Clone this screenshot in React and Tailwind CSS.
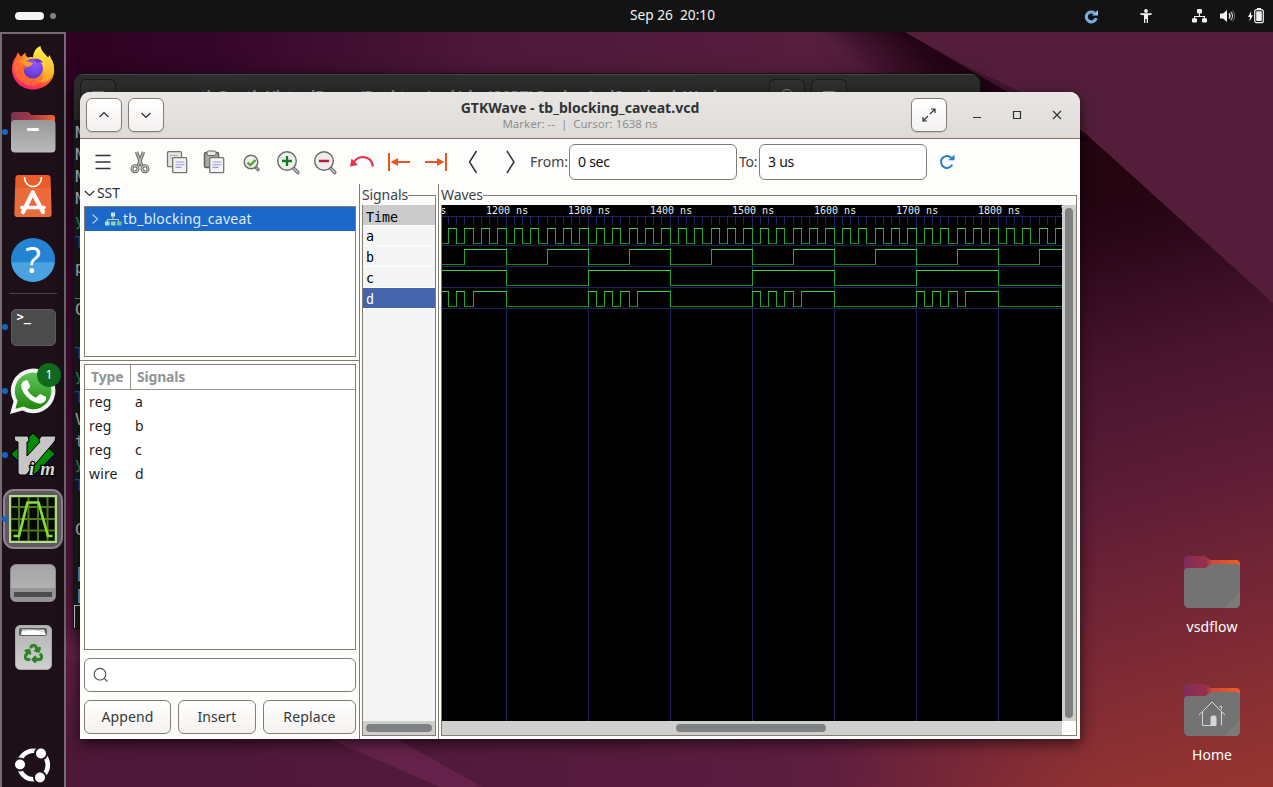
import React from "react";
import { FaRecycle } from "react-icons/fa";

/* ---------- desktop background ---------- */

function Wallpaper() {
  return (
    <svg className="absolute inset-0 h-full w-full" viewBox="0 0 1273 787" preserveAspectRatio="none">
      <defs>
        <linearGradient id="wpTop" x1="0" y1="0" x2="1" y2="0">
          <stop offset="0" stopColor="#2b001d" />
          <stop offset="0.2" stopColor="#35062a" />
          <stop offset="0.45" stopColor="#4d1839" />
          <stop offset="0.75" stopColor="#571e3e" />
          <stop offset="1" stopColor="#3a0f2b" />
        </linearGradient>
        <linearGradient id="wpBottom" x1="0" y1="0" x2="1" y2="0">
          <stop offset="0" stopColor="#4d1737" />
          <stop offset="0.3" stopColor="#51193b" />
          <stop offset="0.6" stopColor="#5c1d3f" />
          <stop offset="0.85" stopColor="#7a2839" />
          <stop offset="1" stopColor="#98352f" />
        </linearGradient>
        <linearGradient id="wpLeft" x1="0" y1="0" x2="0" y2="1">
          <stop offset="0" stopColor="#2b001d" />
          <stop offset="0.55" stopColor="#48143a" />
          <stop offset="0.8" stopColor="#5b1d42" />
          <stop offset="1" stopColor="#4a1635" />
        </linearGradient>
        <linearGradient id="wpRight" gradientUnits="userSpaceOnUse" x1="1080" y1="200" x2="1240" y2="787">
          <stop offset="0" stopColor="#23040f" />
          <stop offset="0.08" stopColor="#2b0718" />
          <stop offset="0.28" stopColor="#48142f" />
          <stop offset="0.52" stopColor="#611e36" />
          <stop offset="0.75" stopColor="#7c2935" />
          <stop offset="1" stopColor="#963530" />
        </linearGradient>
        <linearGradient id="wpFade" gradientUnits="userSpaceOnUse" x1="840" y1="0" x2="1100" y2="0">
          <stop offset="0" stopColor="#fff" stopOpacity="0" />
          <stop offset="1" stopColor="#fff" />
        </linearGradient>
        <mask id="wpMask"><rect x="840" y="0" width="433" height="787" fill="url(#wpFade)" /></mask>
        <linearGradient id="wpFold" gradientUnits="userSpaceOnUse" x1="862" y1="72" x2="900" y2="28">
          <stop offset="0" stopColor="#1c0010" stopOpacity="0" />
          <stop offset="1" stopColor="#1c0010" stopOpacity="0.85" />
        </linearGradient>
      </defs>
      <rect width="1273" height="787" fill="#4d1737" />
      <rect x="0" y="0" width="1080" height="120" fill="url(#wpTop)" />
      <rect x="0" y="92" width="80" height="695" fill="url(#wpLeft)" />
      <rect x="66" y="735" width="1207" height="52" fill="url(#wpBottom)" />
      <polygon points="320,735 390,735 482,787 440,787" fill="#64224a" />
      <polygon points="66,640 80,645 80,664 66,658" fill="#5f1f44" />
      <rect x="840" y="92" width="433" height="695" fill="url(#wpRight)" mask="url(#wpMask)" />
      <polygon points="790,32 905,32 1090,140 1040,150" fill="url(#wpFold)" />
      <polygon points="905,32 1273,32 1273,303 1085,133 1027,95 970,68" fill="#541e3b" />
    </svg>
  );
}

/* ---------- top bar ---------- */

function TopBar() {
  return (
    <div className="relative flex h-8 w-full items-center bg-[#131313] text-[#f2f2f2]">
      <div className="flex w-[66px] items-center gap-[6px] pl-[15px]">
        <span className="h-2 w-[29px] rounded-full bg-[#f4f4f4]" />
        <span className="h-[6px] w-[6px] rounded-full bg-[#828282]" />
      </div>
      <div className="flex-1 pl-[6px] pb-[2px] text-center font-['Noto_Sans',sans-serif] text-[13.7px] whitespace-pre">Sep 26  20:10</div>
      <div className="w-0" />
      <div className="absolute top-0 right-0 flex h-8 items-center">
        <svg className="mr-[41px] h-[15px] w-[15px]" viewBox="0 0 15 15">
          <path d="M12.2 9.2A5 5 0 1 1 10.5 4" fill="none" stroke="#78aee6" strokeWidth="3" />
          <path d="M8 6.5h6V1z" fill="#8fc0ee" />
        </svg>
        <svg className="mr-[40px] h-[14px] w-3" viewBox="0 0 12 14" fill="#f2f2f2">
          <circle cx="6" cy="2" r="1.9" />
          <path d="M.3 4.3h11.4v1.4L8 6.3V14H6.7v-4H5.3v4H4V6.300L.3 5.700z" />
        </svg>
        <svg className="mr-[13px] h-[14px] w-[15px]" viewBox="0 0 15 14" fill="#f2f2f2">
          <rect x="5" y="0" width="5" height="4.500" rx="1" />
          <path d="M7 4h1v3h5v3h-1V8H3v2H2V7h5z" />
          <rect x="0" y="9.300" width="5" height="4.200" rx="1" />
          <rect x="10" y="9.300" width="5" height="4.200" rx="1" />
        </svg>
        <svg className="mr-[13px] h-[14px] w-[15px]" viewBox="0 0 15 14" fill="none">
          <path d="M0 4.500h3L7 1v12L3 9.500H0z" fill="#f2f2f2" />
          <path d="M9 4.500q2 2.500 0 5" stroke="#f2f2f2" strokeWidth="1.300" />
          <path d="M10.800 2.800q3.500 4.200 0 8.400" stroke="#cfcfcf" strokeWidth="1.100" />
          <path d="M12.600 1.500q4 5.500 0 11" stroke="#6f6f6f" strokeWidth="1" />
        </svg>
        <svg className="mr-[9px] h-4 w-4" viewBox="0 0 16 16">
          <path d="M3.200 3L0 9h2l-.6 4.500L5 7.300H3z" fill="#f2f2f2" />
          <rect x="9" y="0" width="4" height="2" fill="#f2f2f2" />
          <rect x="6.700" y="1.700" width="8.600" height="13" rx="2" fill="none" stroke="#f2f2f2" strokeWidth="1.200" />
          <rect x="8.200" y="3.300" width="5.600" height="9.800" rx=".8" fill="#f2f2f2" />
        </svg>
      </div>
    </div>
  );
}

/* ---------- dock icons ---------- */

function Firefox() {
  return (
    <svg className="h-12 w-12" viewBox="0 0 48 48">
      <defs>
        <radialGradient id="ffBody" cx="0.75" cy="0.15" r="1">
          <stop offset="0" stopColor="#fff44f" />
          <stop offset="0.3" stopColor="#ffc02e" />
          <stop offset="0.55" stopColor="#ff7c22" />
          <stop offset="0.8" stopColor="#ff3750" />
          <stop offset="1" stopColor="#e31587" />
        </radialGradient>
        <radialGradient id="ffGlobe" cx="0.6" cy="0.2" r="0.9">
          <stop offset="0" stopColor="#9059ff" />
          <stop offset="0.6" stopColor="#7542e5" />
          <stop offset="1" stopColor="#4a2fb8" />
        </radialGradient>
        <linearGradient id="ffFlame" x1="0" y1="0" x2="0" y2="1">
          <stop offset="0" stopColor="#fff14a" />
          <stop offset="1" stopColor="#ffa225" />
        </linearGradient>
      </defs>
      <path d="M7.500 12C7.500 10 8.500 9.500 9.500 8.500c.3 2 1.300 3 3 4.200 1-2 2.300-3 4-4-.2 2 .4 3.500 2.500 4.800 3-.8 6-.5 8 .5l14-.5c3 4 4.200 8.500 4.200 13.500C45.200 36.500 36 45.500 24 45.500S3 36.500 3 25c0-5 1.500-9.500 4.500-13z" fill="url(#ffBody)" />
      <path d="M24 15c0-7 3-11.500 7.500-13 .4 5 4.500 7.500 7.500 11.500l1.800-2.500c.4 3 3.200 5.500 4 10 .8 4-.3 9-2.300 12.500C38 39 30 39 27 36c6-1 10-5 10-11 0-7-6-10-13-10z" fill="url(#ffFlame)" />
      <circle cx="24" cy="24.500" r="10" fill="url(#ffGlobe)" />
      <path d="M3.800 21C6 17 10 16 13.500 17.500c3 1.300 6.500.8 10.500 1.500-.5 2.500-3.500 3.300-6 4-2 .8-3.300 2.500-3 5.500.5 4.500 4.500 7.500 9.500 7.500 4 0 7-2 9.500-5-1 8-7 11.500-13 10.500C11 40 4.500 32 3.800 21z" fill="#ff6a35" opacity="0.75" />
      <path d="M9 17c4-1.500 9 0 15 2-.5 2.500-4 3.200-6 4-2-1.500-5-4-9-6z" fill="#ff9a2a" />
      <path d="M25 15c4-1 8 1 9 4-2-1-4-1-6 0z" fill="#6a35c9" />
    </svg>
  );
}

function Files() {
  return (
    <svg className="h-12 w-12" viewBox="0 0 48 48">
      <defs>
        <linearGradient id="flBack" x1="0" y1="0" x2="1" y2="0">
          <stop offset="0" stopColor="#7c2f56" />
          <stop offset="0.45" stopColor="#a03a4a" />
          <stop offset="1" stopColor="#f2642c" />
        </linearGradient>
        <linearGradient id="flFront" x1="0" y1="0" x2="0" y2="1">
          <stop offset="0" stopColor="#989898" />
          <stop offset="1" stopColor="#bababa" />
        </linearGradient>
      </defs>
      <path d="M2 14V7q0-3 3-3h13q2 0 3 1.500L22.500 7H43q3 0 3 3v8H2z" fill="url(#flBack)" />
      <rect x="2" y="12" width="44.500" height="32.500" rx="4" fill="url(#flFront)" />
      <rect x="18" y="20" width="12" height="3" rx="1" fill="#fafafa" />
    </svg>
  );
}

function AppCenter() {
  return (
    <svg className="h-12 w-12" viewBox="0 0 48 48">
      <path d="M9 3h30q2.500 0 2.600 2.500L42.500 42q0 3-3 3H8.500q-3 0-3-3L6.400 5.500Q6.500 3 9 3z" fill="#e95d2b" />
      <path d="M6 16h36l.5 26q0 3-3 3H8.500q-3 0-3-3z" fill="#ee7547" opacity="0.6" />
      <path d="M15.500 5c0 6 4 9.500 8.500 9.500s8.500-3.500 8.500-9.500" fill="none" stroke="#fff" strokeWidth="1.700" />
      <path d="M23.700 20.500L14 40M23.700 20.500L34 40" stroke="#fff" strokeWidth="4.200" strokeLinecap="round" fill="none" />
      <path d="M13 35.500h22" stroke="#fff" strokeWidth="3.600" strokeLinecap="round" />
    </svg>
  );
}

function Help() {
  return (
    <div className="flex h-11 w-11 items-center justify-center rounded-full bg-linear-to-b from-[#2484d2] from-55% to-[#4aa3e0] to-56% font-['Noto_Sans',sans-serif] text-[36px] leading-none text-white">
      ?
    </div>
  );
}

function TerminalIcon() {
  return (
    <div className="flex h-[37px] w-[45px] items-start rounded-[5px] border border-[#5c5c5c] bg-[#4b4b4b] pl-[5px] font-['DejaVu_Sans_Mono',monospace] text-[12px] leading-[15px] font-bold text-white">
      &gt;_
    </div>
  );
}

function WhatsApp() {
  return (
    <div className="relative h-12 w-12">
      <svg className="h-12 w-12" viewBox="0 0 48 48">
        <defs>
          <linearGradient id="waGreen" x1="0" y1="0" x2="0" y2="1">
            <stop offset="0" stopColor="#5fc55a" />
            <stop offset="1" stopColor="#20860c" />
          </linearGradient>
        </defs>
        <path d="M1 47L4.500 34.500A22.300 22.300 0 1 1 13.500 43.500z" fill="#f4f4f4" />
        <path d="M6.500 41.800L8.500 33.500A18.300 18.300 0 1 1 14.500 39.500z" fill="url(#waGreen)" />
        <path
          d="M17 13c1 0 1.500.3 2 1.300l2 4.500c.3.8 0 1.400-.6 2l-1.400 1.600c-.5.5-.4 1 0 1.500 1.800 3 4 5 7.500 6.500.6.3 1.100.2 1.500-.3l2-2.400c.5-.6 1-.7 1.700-.4l4.500 2.200c.8.4 1 .8 1 1.500 0 3-3 5.500-6 5.500-3.500 0-9-2.500-12.500-6-3.500-3.500-6.500-8-6.500-11.500 0-2.500 2-5.500 4.800-5.500z"
          fill="#fff"
        />
      </svg>
      <span className="absolute -top-[4px] left-[28px] flex h-6 w-6 items-center justify-center rounded-full bg-[#116a1e] font-['Noto_Sans',sans-serif] text-[12px] text-white">1</span>
    </div>
  );
}

function VimIcon() {
  return (
    <svg className="h-12 w-12" viewBox="0 0 48 48">
      <polygon points="24,3 47,25 24,48 2,25" fill="#0b0b52" />
      <polygon points="24,2 46,23 24,45 2,23" fill="#038a03" stroke="#000" />
      <polygon
        points="5,5 19,5 20,10 18,11 18,25 31,11 30,9 32,5 47,5 46,10 17,44 11,44 9,42 9,11 6,10"
        fill="#c6c6c6"
        stroke="#000"
      />
      <text x="20" y="44" fontSize="19" fontStyle="italic" fontWeight="bold" fontFamily="Liberation Serif, serif" fill="#d8d8d8" stroke="#000" strokeWidth="2.500" paintOrder="stroke" textLength="26">im</text>
    </svg>
  );
}

function GtkWaveIcon() {
  return (
    <svg className="h-[48px] w-[48px]" viewBox="0 0 48 48">
      <rect x="1" y="1" width="46" height="46" fill="#020802" stroke="#aede85" strokeWidth="2.500" />
      <path d="M10 2v44M19.500 2v44M29 2v44M38.500 2v44M2 12h44M2 24h44M2 35.500h44" stroke="#4c7a22" strokeWidth="2" />
      <path d="M4.500 41h5.500L18.500 7.500h11L39 41h4.500" fill="none" stroke="#85e033" strokeWidth="2.600" />
    </svg>
  );
}

function DriveIcon() {
  return (
    <div className="flex h-[38px] w-[46px] flex-col justify-end overflow-hidden rounded-[6px] border border-[#8a8a8a] bg-linear-to-b from-[#a5a5a5] to-[#b8b8b8]">
      <div className="h-[13px] bg-[#969696] px-[3px] pt-[4px]">
        <div className="h-[5px] bg-[#4d4d4d]" />
      </div>
    </div>
  );
}

function TrashIcon() {
  return (
    <div className="flex h-[45px] w-[37px] flex-col items-center rounded-[5px] border border-[#a8a8a8] bg-linear-to-b from-[#b3b3b3] to-[#cfcfcf] pt-[2px]">
      <svg className="h-[8px] w-[30px]" viewBox="0 0 30 8">
        <rect x="1" y="0" width="28" height="8" rx="2" fill="#5e5e5e" />
        <path d="M3 7L4 1.500l22 .3L28 7z" fill="#fff" />
        <path d="M4 2.800q11-3 23 1.500" stroke="#aaa" strokeWidth=".7" fill="none" />
      </svg>
      <FaRecycle className="mt-[8px] text-[19px] text-[#2d8425]" stroke="#2d8425" strokeWidth="26" />
    </div>
  );
}

function UbuntuIcon() {
  return (
    <svg className="h-9 w-9" viewBox="0 0 36 36">
      <circle cx="18.500" cy="18" r="14.300" fill="none" stroke="#fff" strokeWidth="4.600" />
      <g fill="#fff" stroke="#22121b" strokeWidth="2">
        <circle cx="5" cy="17.500" r="6" />
        <circle cx="26" cy="6.500" r="6" />
        <circle cx="25" cy="30.500" r="6" />
      </g>
    </svg>
  );
}

function DockSlot({ children, running, active }) {
  return (
    <div className="relative flex h-16 w-full shrink-0 items-center justify-center">
      {active && <span className="absolute top-[2px] left-[1px] h-[60px] w-[60px] rounded-[11px] border-2 border-[#8f8790] bg-[#63585f]" />}
      {running && <span className="absolute top-[29px] left-0 h-[6px] w-[6px] rounded-full bg-[#0f68c4]" />}
      <div className="relative flex items-center justify-center">{children}</div>
    </div>
  );
}

function Dock() {
  return (
    <div className="flex h-[755px] w-[66px] flex-col items-center overflow-hidden border-2 border-b-0 border-[#746c72] bg-[#1d1018]">
      <div className="h-[2px] shrink-0" />
      <DockSlot><Firefox /></DockSlot>
      <DockSlot running><Files /></DockSlot>
      <DockSlot><AppCenter /></DockSlot>
      <DockSlot><Help /></DockSlot>
      <div className="my-px h-px w-12 shrink-0 bg-[#4b4248]" />
      <DockSlot running><TerminalIcon /></DockSlot>
      <DockSlot running><WhatsApp /></DockSlot>
      <DockSlot running><VimIcon /></DockSlot>
      <DockSlot running active><GtkWaveIcon /></DockSlot>
      <DockSlot><DriveIcon /></DockSlot>
      <DockSlot><TrashIcon /></DockSlot>
      <div className="flex-1" />
      <div className="pb-[4px]"><UbuntuIcon /></div>
    </div>
  );
}

/* ---------- terminal window behind ---------- */

const TERMINAL_LINES = [
  ["N", "h-[22px] text-[#c9c9c9]"],
  ["N", "h-[22px] text-[#c9c9c9]"],
  ["N", "h-[22px] text-[#c9c9c9]"],
  ["N", "h-[22px] text-[#c9c9c9]"],
  ["y", "h-[22px] text-[#2aa56a]"],
  ["T", "h-[25px] text-[#2060b8]"],
  ["p", "h-[22px] text-[#c9c9c9]"],
  ["_", "h-[20px] text-[#c9c9c9]"],
  ["C", "h-[44px] text-[#c9c9c9]"],
  ["T", "h-[22px] text-[#2060b8]"],
  ["y", "h-[22px] text-[#2aa56a]"],
  ["T", "h-[22px] text-[#2060b8]"],
  ["V", "h-[22px] text-[#c9c9c9]"],
  ["t", "h-[22px] text-[#c9c9c9]"],
  ["y", "h-[22px] text-[#2aa56a]"],
  ["T", "h-[44px] text-[#2060b8]"],
  ["C", "h-[44px] text-[#c9c9c9]"],
  ["[", "h-[22px] text-[#c9c9c9]"],
  ["[", "h-[20px] text-[#c9c9c9]"],
];

function TerminalWindow() {
  return (
    <div className="absolute top-[73px] left-[73px] flex h-[556px] w-[908px] flex-col overflow-hidden rounded-t-[10px] border border-[#121212] bg-[#1b1b1d] shadow-[0_4px_18px_rgba(0,0,0,0.5)]">
      <div className="flex h-[46px] shrink-0 items-start border-t border-[#454545] bg-[#2c2c2c] px-[6px] pt-[4px]">
        <div className="flex h-[34px] w-9 justify-center rounded-md border border-[#1a1a1a] bg-[#303030] pt-[11px]"><span className="h-px w-3 bg-[#777]" /></div>
        <div className="h-[30px] flex-1 overflow-hidden pt-[6px] pl-[60px] text-center font-['Noto_Sans',sans-serif] text-[14.5px] font-bold whitespace-nowrap text-[#8a8a8a]">
          yath@yath-VirtualBox: ~/Desktop/vsd/sky130RTLDesignAndSynthesisWork
        </div>
        <div className="mr-[6px] ml-[40px] flex h-[34px] w-9 justify-center rounded-md border border-[#1a1a1a] bg-[#303030] pt-[9px]"><span className="h-3 w-3 rounded-full border border-[#888]" /></div>
        <div className="mr-[127px] flex h-[34px] w-9 justify-center rounded-md border border-[#1a1a1a] bg-[#303030] pt-[11px]"><span className="h-px w-3 bg-[#888]" /></div>
      </div>
      <div className="flex flex-col pt-[2px] pl-px font-['DejaVu_Sans_Mono',monospace] text-[15px] leading-[22px]">
        {TERMINAL_LINES.map(([text, cls], i) => (
          <div key={i} className={cls}>{text}</div>
        ))}
        <div className="-ml-px h-6 w-3 border border-[#d0d0d0]" />
      </div>
    </div>
  );
}

/* ---------- desktop folders ---------- */

function Folder({ id, home }) {
  return (
    <svg className="h-[54px] w-14" viewBox="0 0 56 54">
      <defs>
        <linearGradient id={id} x1="0" y1="0" x2="1" y2="0">
          <stop offset="0" stopColor="#812c5d" />
          <stop offset="0.4" stopColor="#9b3049" />
          <stop offset="0.5" stopColor="#c94c36" />
          <stop offset="1" stopColor="#ee5f27" />
        </linearGradient>
      </defs>
      <path d="M0 16V5q0-4 4-4h15.500q2 0 3.500 1.500L26 5h26q4 0 4 4v7z" fill={`url(#${id})`} />
      <path d="M0 17q0-4 4-4h16q2 0 3.500-1.500L25 10q1.500-1 3-1h24q4 0 4 4v35q0 5-5 5H5q-5 0-5-5z" fill="#737373" />
      <path d="M56 37v11q0 5-5 5H41z" fill="#7b7b7b" />
      {home && (
        <g fill="none" stroke="#d6d6d6" strokeWidth="1">
          <path d="M15 32L28 19l13 13M18.500 29v13.500h8.500M37.500 29v13.500M35.500 23.500h2v3" />
          <path d="M27 42.500v-8q0-1.500 1.500-1.500h2q1.500 0 1.500 1.500v8z" fill="#d6d6d6" />
        </g>
      )}
    </svg>
  );
}

function DesktopFolders() {
  return (
    <div className="absolute top-[555px] left-[1160px] flex w-[104px] flex-col gap-[48px] font-['Noto_Sans',sans-serif] text-[14px] text-white">
      <div className="flex h-20 flex-col items-center justify-between">
        <Folder id="folderA" />
        <span className="leading-4 tracking-[0.15px]">vsdflow</span>
      </div>
      <div className="flex h-20 flex-col items-center justify-between">
        <Folder id="folderB" home />
        <span className="leading-4">Home</span>
      </div>
    </div>
  );
}

/* ---------- GTKWave: title bar ---------- */

function HeaderButton({ children }) {
  return (
    <div className="flex h-[34px] w-9 items-center justify-center rounded-[6px] border border-[#857c75] bg-linear-to-b from-white to-[#f4f1f0] shadow-[0_1px_1px_rgba(0,0,0,0.12)]">
      <svg className="h-4 w-4" viewBox="0 0 16 16" fill="none" stroke="#2e3436" strokeWidth="1.200">{children}</svg>
    </div>
  );
}

function TitleBar() {
  return (
    <div className="flex h-[47px] shrink-0 items-center border-b border-[#7c736b] bg-linear-to-b from-[#e8e6e3] to-[#dfdcd8] px-[6px]">
      <div className="flex w-[170px] gap-[6px]">
        <HeaderButton><path d="M3.500 10L8 5.700l4.500 4.300" /></HeaderButton>
        <HeaderButton><path d="M3.500 6L8 10.300 12.500 6" /></HeaderButton>
      </div>
      <div className="flex flex-1 flex-col items-center pt-[3px] font-['Noto_Sans',sans-serif]">
        <div className="h-[17px] text-[14px] leading-[15px] font-bold tracking-[0.02px] text-[#2e3436]">GTKWave - tb_blocking_caveat.vcd</div>
        <div className="h-4 text-[11.5px] leading-[14px] whitespace-pre text-[#8d8f8f]">Marker: --  |  Cursor: 1638 ns</div>
      </div>
      <div className="flex w-[170px] items-center pl-[7px]">
        <HeaderButton><path d="M10 2h4v4M14 2L9 7M2 10v4h4M2 14l5-5" strokeDasharray="none" /></HeaderButton>
        <div className="flex flex-1 items-center justify-between pr-[9px] pl-[22px]">
          {["M4 10.500h8", "M4.500 4.500h7v7h-7z", "M4 4l8 8M12 4l-8 8"].map((d) => (
            <svg key={d} className="h-4 w-4" viewBox="0 0 16 16" fill="none" stroke="#2e3436" strokeWidth="1.200"><path d={d} /></svg>
          ))}
        </div>
      </div>
    </div>
  );
}

/* ---------- GTKWave: toolbar ---------- */

function Lens({ r, children }) {
  return (
    <>
      {r === "s" ? (
        <>
          <path d="M16 16.500l3 3" stroke="#666" strokeWidth="3.200" strokeLinecap="round" />
          <path d="M16 16.500l3 3" stroke="#bbb" strokeWidth="1.300" strokeLinecap="round" />
          <circle cx="12" cy="12" r="6.800" fill="#eeeeec" stroke="#6a6c69" strokeWidth="1.400" />
        </>
      ) : (
        <>
          <path d="M17.500 18l4.300 4.500" stroke="#666" strokeWidth="3.500" strokeLinecap="round" />
          <path d="M17.500 18l4.300 4.500" stroke="#ccc" strokeWidth="1.400" strokeLinecap="round" />
          <circle cx="11" cy="11" r="9.300" fill="#eeeeec" stroke="#6a6c69" strokeWidth="1.400" />
        </>
      )}
      {children}
    </>
  );
}

const sheet = (x, y, fill) => <rect x={x} y={y} width="14" height="15" rx="1" fill={fill} stroke="#73756f" strokeWidth="1.300" />;

const TOOLS = [
  <path d="M4.500 5.500h15M4.500 12h15M4.500 18.500h15" stroke="#2e3436" strokeWidth="1.500" />,
  <g fill="none">
    <path d="M8.500 2l5.500 14M15.500 2L10 16" stroke="#60625e" strokeWidth="3.400" />
    <path d="M8.500 2l5.500 14M15.500 2L10 16" stroke="#b7b9b4" strokeWidth="1.500" />
    <circle cx="7" cy="18.700" r="3" stroke="#60625e" strokeWidth="3" />
    <circle cx="17" cy="18.700" r="3" stroke="#60625e" strokeWidth="3" />
    <circle cx="7" cy="18.700" r="3" stroke="#c4c6c1" strokeWidth="1.200" />
    <circle cx="17" cy="18.700" r="3" stroke="#c4c6c1" strokeWidth="1.200" />
  </g>,
  <g>
    {sheet(2.5, 1.7, "#e4e4e4")}
    <path d="M5 5.500h8M5 8h8" stroke="#b0b0b0" strokeWidth="1" />
    {sheet(7.7, 7.7, "#f3f3f3")}
    <path d="M10.500 12h9M10.500 14.700h9M10.500 17.400h6" stroke="#9c9be0" strokeWidth="1.100" />
  </g>,
  <g>
    <rect x="2.500" y="2.500" width="14" height="15" rx="1.500" fill="#a7a9a4" stroke="#5d5f5b" strokeWidth="1.500" />
    <rect x="5" y="1" width="9" height="4.500" rx="1.500" fill="#e8e8e8" stroke="#5d5f5b" />
    {sheet(7.7, 7.7, "#f3f3f3")}
    <path d="M10.500 12h9M10.500 14.700h9M10.500 17.400h6" stroke="#9c9be0" strokeWidth="1.100" />
  </g>,
  <Lens r="s"><path d="M8.500 12.500l2.800 2.800L16.500 10" fill="none" stroke="#47a32a" strokeWidth="2.200" /></Lens>,
  <Lens><path d="M11 6v10M6 11h10" stroke="#157b22" strokeWidth="2.300" /></Lens>,
  <Lens><path d="M6 11h10" stroke="#b6183a" strokeWidth="2.600" /></Lens>,
  <g>
    <path d="M3.500 12.500C7 5.500 21 4 23 16.500" fill="none" stroke="#e6334e" strokeWidth="2.200" />
    <path d="M1.500 8.500L8 15l-8 1.500z" fill="#e6334e" />
  </g>,
  <g fill="#e95420">
    <rect x="1" y="3" width="2" height="18" />
    <path d="M3.500 12L11 8v3h12v2H11v3z" />
  </g>,
  <g fill="#e95420">
    <rect x="21" y="3" width="2" height="18" />
    <path d="M20.500 12L13 8v3H1v2h12v3z" />
  </g>,
  <path d="M15.500 1L8.500 12l7 11" fill="none" stroke="#2e3436" strokeWidth="1.500" />,
  <path d="M9 1l7 11-7 11" fill="none" stroke="#2e3436" strokeWidth="1.500" />,
];

function Toolbar() {
  return (
    <div className="flex h-[45px] shrink-0 items-center pl-[4px] font-['Noto_Sans',sans-serif] text-[14px] text-[#3d4345]">
      {TOOLS.map((icon, i) => (
        <div key={i} className="flex w-[37px] shrink-0 justify-center">
          <svg className="h-6 w-6 overflow-visible" viewBox="0 0 24 24">{icon}</svg>
        </div>
      ))}
      <span className="ml-[2px] w-[39px] shrink-0">From:</span>
      <div className="flex h-9 w-[168px] items-center rounded-[6px] border border-[#857c75] bg-white pl-2 tracking-[-0.25px] text-[#111]">0 sec</div>
      <span className="ml-[2px] w-[20px] shrink-0 tracking-[-0.2px]">To:</span>
      <div className="flex h-9 w-[168px] items-center rounded-[6px] border border-[#857c75] bg-white pl-2 tracking-[-0.25px] text-[#111]">3 us</div>
      <svg className="ml-[12px] h-4 w-4" viewBox="0 0 16 16">
        <path d="M13.300 10.800A6 6 0 1 1 12.400 3.800" fill="none" stroke="#2b7fc9" strokeWidth="2" />
        <path d="M9 6.300h6.500V.8z" fill="#2b7fc9" />
      </svg>
    </div>
  );
}

/* ---------- GTKWave: left panel ---------- */

function LeftPanel() {
  const rows = [["reg", "a"], ["reg", "b"], ["reg", "c"], ["wire", "d"]];
  const button = "flex h-[34px] items-center justify-center rounded-[6px] border border-[#857c75] bg-linear-to-b from-white to-[#f4f2f0] pb-[2px]";
  return (
    <div className="flex w-[280px] shrink-0 flex-col border-r border-[#857c6f] font-['Noto_Sans',sans-serif] text-[14px] text-[#2e3436]">
      <div className="flex h-[22px] items-center pb-[5px] pl-[4px]">
        <svg className="h-3 w-[11px]" viewBox="0 0 11 12"><path d="M.8 4l4.700 4.500L10.200 4" fill="none" stroke="#2e3436" strokeWidth="1.200" /></svg>
        <span className="pl-[2px] tracking-[-0.1px]">SST</span>
      </div>
      <div className="mr-[3px] ml-[4px] h-[151px] border border-[#857c6f] bg-white">
        <div className="flex h-6 items-center bg-[#1b68c9] text-[#dcecff]">
          <svg className="ml-[6px] h-3 w-2" viewBox="0 0 8 12"><path d="M1.500 1.500L6.500 6l-5 4.500" fill="none" stroke="#a9cdf2" strokeWidth="1.200" /></svg>
          <svg className="ml-[5px] h-4 w-[18px]" viewBox="0 0 18 16">
            <path d="M9 5v4M3.500 11V8.500h11V11" fill="none" stroke="#c4d4e8" strokeWidth="1" />
            <rect x="7" y="1.500" width="4" height="4" fill="#cfe0f5" />
            <rect x="1" y="10.500" width="4.500" height="4" fill="#a6dccb" />
            <rect x="7" y="10.500" width="4.500" height="4" fill="#8fd6b2" />
            <rect x="13" y="10.500" width="4.500" height="4" fill="#66c69a" />
          </svg>
          <span className="pb-[2px] pl-px tracking-[0.25px]">tb_blocking_caveat</span>
        </div>
      </div>
      <div className="mt-[3px] h-px bg-[#857c6f]" />
      <div className="mt-[3px] mr-[3px] ml-[4px] h-[286px] border border-[#857c6f] bg-white">
        <div className="flex h-[25px] border-b border-[#9b948b] font-bold text-[#929595]">
          <div className="flex w-[46px] items-center border-r border-[#9b948b] pb-[2px] pl-[6px] tracking-[-0.1px]">Type</div>
          <div className="flex items-center pb-[2px] pl-[6px] tracking-[-0.2px]">Signals</div>
        </div>
        {rows.map(([type, name]) => (
          <div key={name} className="flex h-6 items-center pb-[2px] pl-[4px] text-[#1d1d1d]">
            <span className="w-[46px] tracking-[0.15px]">{type}</span>
            <span>{name}</span>
          </div>
        ))}
      </div>
      <div className="mt-[8px] mr-[3px] ml-[4px] flex h-[34px] items-center rounded-[6px] border border-[#857c75] bg-white pl-[8px]">
        <svg className="h-4 w-4" viewBox="0 0 16 16" fill="none" stroke="#4a4f51" strokeWidth="1.100"><circle cx="7" cy="7.200" r="5.800" /><path d="M11.200 11.300l3.300 3.200" /></svg>
      </div>
      <div className="mt-[8px] mr-[3px] ml-[4px] flex gap-[7px] text-[#33393b]">
        <div className={`${button} w-[87px] tracking-[0.15px]`}>Append</div>
        <div className={`${button} w-[78px]`}>Insert</div>
        <div className={`${button} w-[93px] tracking-[0.15px]`}>Replace</div>
      </div>
    </div>
  );
}

/* ---------- GTKWave: signals column ---------- */

function FrameTop({ label }) {
  return (
    <div className="flex h-[21px] shrink-0 items-end">
      <span className="h-[21px] font-['Noto_Sans',sans-serif] text-[14px] leading-[22px] tracking-[-0.1px] text-[#3d4345]">{label}</span>
      <span className="h-[10px] flex-1 border-t border-r border-[#857c6f]" />
    </div>
  );
}

function SignalsPanel() {
  const row = "flex h-[21px] items-center border-b border-white pt-[3px] pl-[3px]";
  return (
    <div className="flex w-[79px] shrink-0 flex-col border-r border-[#857c6f] pr-[2px] pb-[3px] pl-[2px]">
      <FrameTop label="Signals" />
      <div className="flex flex-1 flex-col border border-t-0 border-[#857c6f] bg-[#f4f4f4] font-['DejaVu_Sans_Mono',monospace] text-[13.3px] text-black">
        <div className="flex h-[21px] items-center border-b border-white bg-[#cbcbcb] pt-[5px] pl-[3px]">Time</div>
        <div className="flex h-5 items-center border-b border-white pt-[3px] pl-[3px]">a</div>
        <div className={row}>b</div>
        <div className={row}>c</div>
        <div className={`${row} bg-[#4464ac] text-white`}>d</div>
        <div className="flex-1" />
        <div className="flex h-[14px] items-center bg-[#cfcfcd] px-[3px]"><span className="h-2 flex-1 rounded-full bg-[#7e8182]" /></div>
      </div>
    </div>
  );
}

/* ---------- GTKWave: waves ---------- */

const LEFT = 442;
const WIDTH = 620;
const T0 = 1122;
const T1 = 1880;

const xOf = (t) => {
  if (t <= T0) return -1;
  if (t >= T1) return WIDTH + 1;
  return Math.floor(506 + (t - 1200) * 0.8201) - LEFT;
};

const everyTen = [];
for (let t = 1130; t <= 1870; t += 10) everyTen.push(t);

const SIGNALS = [
  { initial: 0, top: 23, edges: everyTen },
  { initial: 0, top: 44, edges: everyTen.filter((t) => t % 50 === 0) },
  { initial: 1, top: 65, edges: [1200, 1300, 1400, 1500, 1600, 1700, 1800] },
  {
    initial: 1,
    top: 86,
    edges: [
      1130, 1140, 1150, 1160, 1200,
      1300, 1310, 1320, 1330, 1340, 1350, 1360, 1400,
      1500, 1510, 1520, 1530, 1540, 1550, 1560, 1600,
      1700, 1710, 1720, 1730, 1740, 1750, 1760, 1800,
    ],
  },
];

function Trace({ initial, top, edges }) {
  const points = [T0, ...edges, T1];
  let high = "";
  let low = "";
  let vertical = "";
  points.slice(0, -1).forEach((t, i) => {
    const x = xOf(t);
    const next = xOf(points[i + 1]);
    if ((initial + i) % 2 === 1) high += `M${x} ${top + 0.5}H${next + 1}`;
    else low += `M${x} ${top + 15.5}H${next + 1}`;
    if (i > 0) vertical += `M${x + 0.5} ${top}V${top + 16}`;
  });
  return (
    <g fill="none" strokeWidth="1">
      <path d={low} stroke="#168a1c" />
      <path d={vertical} stroke="#23a829" />
      <path d={high} stroke="#3fd044" />
    </g>
  );
}

function WaveCanvas() {
  const majors = [1200, 1300, 1400, 1500, 1600, 1700, 1800];
  return (
    <svg className="h-[516px] w-[620px] shrink-0 bg-black" viewBox="0 0 620 516">
      <g fill="none" stroke="#22225f" strokeWidth="1">
        <path d="M0 11.500H620M0 40.500H620M0 61.500H620M0 82.500H620M0 103.500H620" />
        <path d={everyTen.map((t) => `M${xOf(t) + 0.5} 11V20`).join("")} />
        <path d={majors.map((t) => `M${xOf(t) + 0.5} 9V516`).join("")} />
      </g>
      {SIGNALS.map((s) => <Trace key={s.top} {...s} />)}
      <g fill="#ececec" fontFamily="DejaVu Sans Mono, monospace" fontSize="10">
        {[1100, ...majors, 1900].map((t) => (
          <text key={t} x={44 + (t - 1200) * 0.82} y="9">{t} ns</text>
        ))}
      </g>
    </svg>
  );
}

function WavesPanel() {
  return (
    <div className="flex flex-1 flex-col pr-[3px] pb-[3px] pl-[2px]">
      <FrameTop label="Waves" />
      <div className="flex flex-1 flex-col border border-t-0 border-[#857c6f]">
        <div className="flex h-[516px]">
          <WaveCanvas />
          <div className="flex flex-1 justify-center bg-[#cfcfcd] py-[3px]"><span className="w-2 rounded-full bg-[#7e8182]" /></div>
        </div>
        <div className="flex flex-1">
          <div className="flex w-[620px] items-center bg-[#cfcfcd] pl-[234px]"><span className="h-2 w-[150px] rounded-full bg-[#7e8182]" /></div>
        </div>
      </div>
    </div>
  );
}

function GtkWaveWindow() {
  return (
    <div className="absolute top-[92px] left-[80px] flex h-[647px] w-[1000px] flex-col overflow-hidden rounded-t-[10px] bg-[#fdfdfb] shadow-[0_4px_14px_rgba(0,0,0,0.65)]">
      <TitleBar />
      <Toolbar />
      <div className="flex min-h-0 flex-1">
        <LeftPanel />
        <SignalsPanel />
        <WavesPanel />
      </div>
    </div>
  );
}

export default function App() {
  return (
    <div className="relative h-[787px] w-[1273px] overflow-hidden bg-[#4d1737]">
      <Wallpaper />
      <div className="relative flex flex-col">
        <TopBar />
        <Dock />
      </div>
      <TerminalWindow />
      <GtkWaveWindow />
      <DesktopFolders />
    </div>
  );
}
